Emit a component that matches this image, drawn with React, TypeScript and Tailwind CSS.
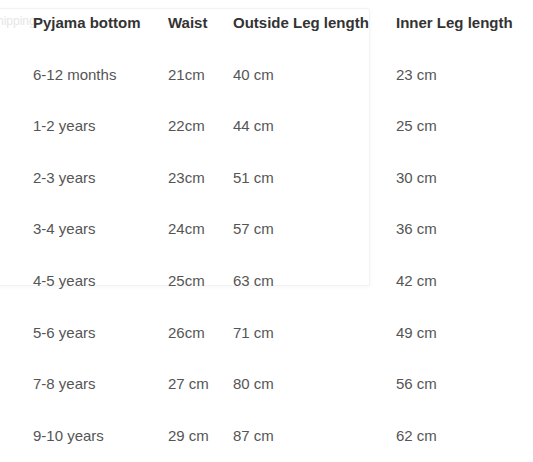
const rows = [
  ["6-12 months", "21cm", "40 cm", "23 cm"],
  ["1-2 years", "22cm", "44 cm", "25 cm"],
  ["2-3 years", "23cm", "51 cm", "30 cm"],
  ["3-4 years", "24cm", "57 cm", "36 cm"],
  ["4-5 years", "25cm", "63 cm", "42 cm"],
  ["5-6 years", "26cm", "71 cm", "49 cm"],
  ["7-8 years", "27 cm", "80 cm", "56 cm"],
  ["9-10 years", "29 cm", "87 cm", "62 cm"],
];

const headers = ["Pyjama bottom", "Waist", "Outside Leg length", "Inner Leg length"];

export default function App() {
  return (
    <div
      className="relative h-[462px] w-[533px] overflow-hidden bg-white text-[15px] leading-[18px]"
      style={{ fontFamily: '"Liberation Sans", Arial, sans-serif' }}
    >
      {/* faint popup card behind the table */}
      <div className="absolute left-[-10px] top-[8px] h-[278px] w-[380px] rounded-[2px] border border-[#f3f3f3] bg-white shadow-[0_1px_4px_rgba(0,0,0,0.04)]" />
      <span className="absolute left-[-11px] top-[14px] text-[12px] leading-[14px] text-[#e6e6e6]">Shipping</span>

      <div className="relative pl-[33px]">
        <div className="grid h-[51.6px] grid-cols-[135px_65px_163px_1fr] pt-[14px] font-bold text-[#333]">
          {headers.map((h) => (
            <div key={h} className="whitespace-nowrap">
              {h}
            </div>
          ))}
        </div>
        {rows.map((r) => (
          <div key={r[0]} className="grid h-[51.6px] grid-cols-[135px_65px_163px_1fr] pt-[14px] text-[#555]">
            {r.map((c, i) => (
              <div key={i} className="whitespace-nowrap">
                {c}
              </div>
            ))}
          </div>
        ))}
      </div>
    </div>
  );
}
